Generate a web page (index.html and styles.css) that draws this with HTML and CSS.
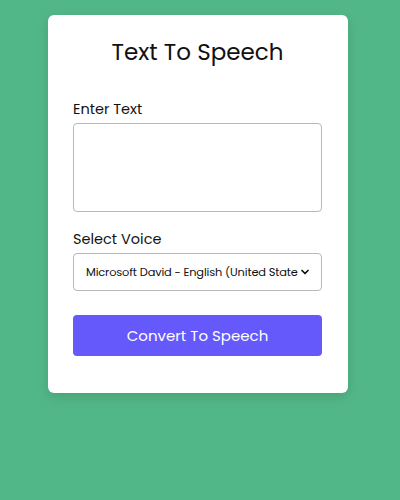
FILE: index.html
```html
<!DOCTYPE html>
<html>
<head>
<meta charset="utf-8">
<link rel="stylesheet" href="styles.css">
</head>
<body>
<div class="card">
  <h1 class="title">Text To Speech</h1>
  <label class="label" for="txt">Enter Text</label>
  <textarea id="txt" class="textarea"></textarea>
  <label class="label label-voice" for="voice">Select Voice</label>
  <div class="select-wrap">
    <select id="voice" class="select">
      <option>Microsoft David - English (United States)</option>
    </select>
    <svg class="chev" width="8" height="6" viewBox="0 0 8 6"><path d="M1 1.5 L4 4.5 L7 1.5" fill="none" stroke="#111" stroke-width="1.7" stroke-linecap="round" stroke-linejoin="round"/></svg>
  </div>
  <button class="btn">Convert To Speech</button>
</div>
</body>
</html>
```
FILE: styles.css
```css
* { box-sizing: border-box; }
html, body { margin: 0; height: 100%; }
body {
  background: #52b788;
  font-family: "Poppins", "Noto Sans", "Open Sans", sans-serif;
  display: flex;
  justify-content: center;
  align-items: flex-start;
  padding: 15px 4px 0 0;
}
.card {
  width: 300px;
  background: #fff;
  border-radius: 6px;
  padding: 22px 26px 37px 25px;
  display: flex;
  flex-direction: column;
  box-shadow: 0 4px 12px rgba(0,0,0,0.12);
}
.title {
  margin: 0 0 32px;
  font-size: 23px;
  font-weight: 400;
  line-height: 30px;
  text-align: center;
  color: #111;
}
.label {
  font-size: 14.5px;
  line-height: 20px;
  color: #111;
  margin-bottom: 4px;
}
.label-voice { margin-top: 17px; }
.textarea {
  height: 89px;
  border: 1px solid #b8b8b8;
  border-radius: 4px;
  resize: none;
  font-family: inherit;
  padding: 8px;
}
.select-wrap { position: relative; }
.select {
  width: 100%;
  height: 38px;
  border: 1px solid #b8b8b8;
  border-radius: 4px;
  background: #fff;
  appearance: none;
  -webkit-appearance: none;
  font-family: inherit;
  font-size: 11.4px;
  letter-spacing: -0.15px;
  color: #111;
  padding: 0 23px 0 12px;
}
.chev { position: absolute; right: 13px; top: 16px; pointer-events: none; }
.btn {
  margin-top: 24px;
  height: 41px;
  border: none;
  border-radius: 4px;
  background: #6559fc;
  color: #fff;
  font-family: inherit;
  font-size: 15px;
}
```
